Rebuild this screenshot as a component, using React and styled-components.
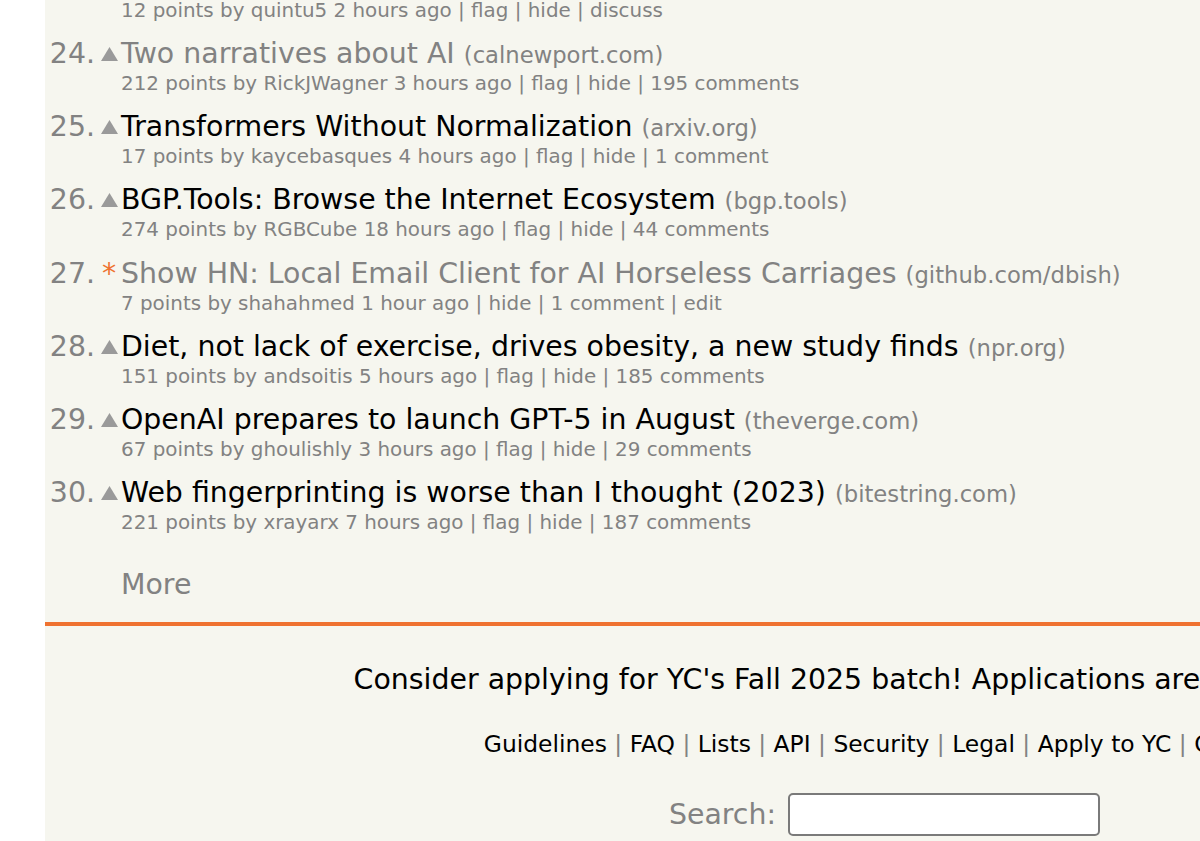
import React from 'react';
import styled, { createGlobalStyle } from 'styled-components';

const GlobalStyle = createGlobalStyle`
  html, body {
    margin: 0;
    padding: 0;
    overflow: hidden;
    background: #ffffff;
  }
  body {
    font-family: Verdana, "DejaVu Sans", sans-serif;
  }
`;

const Page = styled.div`
  padding-left: 45px;
  height: 841px;
`;

const Panel = styled.div`
  display: flow-root;
  width: 1679px;
  height: 100%;
  background: #f6f6ef;
  font-family: Verdana, "DejaVu Sans", sans-serif;
  color: #828282;
`;

const List = styled.div`
  display: grid;
  grid-template-columns: 52px 24px 1fr;
  margin-top: -2px;
`;

const Rank = styled.div`
  font-size: 28.4px;
  line-height: 34px;
  height: 34px;
  text-align: right;
  padding-right: 2px;
`;

const Vote = styled.div`
  display: flex;
  justify-content: center;
  align-items: center;
  height: 34px;
`;

const Star = styled.span`
  color: #ef7230;
  font-size: 28.4px;
  line-height: 34px;
`;

const TitleLine = styled.div`
  font-size: 28.4px;
  line-height: 34px;
  height: 34px;
  white-space: nowrap;
  color: ${(p) => (p.$visited ? '#828282' : '#000000')};
`;

const Site = styled.span`
  font-size: 22.7px;
  line-height: 1;
  color: #828282;
`;

const Sub = styled.div`
  grid-column: 3;
  font-size: 19.9px;
  line-height: 26px;
  height: 26px;
  white-space: nowrap;
  margin-bottom: ${(p) => (p.$last ? '0' : '13.17px')};
`;

const MoreRow = styled.div`
  grid-column: 3;
  font-size: 28.4px;
  line-height: 34px;
  margin-top: 32px;
`;

const Footer = styled.div`
  margin-top: 20px;
  border-top: 4px solid #ef7230;
  text-align: center;
  padding-top: 37px;
`;

const Apply = styled.div`
  font-size: 28.4px;
  line-height: 34px;
  color: #000000;
  white-space: nowrap;
`;

const Links = styled.div`
  margin-top: 33px;
  font-size: 23.4px;
  line-height: 28px;
  color: #828282;
  white-space: nowrap;

  a {
    color: #000000;
  }
`;

const SearchRow = styled.form`
  margin-top: 35px;
  display: flex;
  justify-content: center;
  align-items: center;
  gap: 12px;
  font-size: 28.4px;
`;

const SearchInput = styled.input`
  width: 312px;
  height: 43px;
  box-sizing: border-box;
  border: 2px solid #7a7a7a;
  border-radius: 5px;
  background: #ffffff;
`;

const Arrow = () => (
  <svg width="17" height="14" viewBox="0 0 17 14">
    <polygon points="8.5,0 17,14 0,14" fill="#9a9a9a" />
  </svg>
);

const items = [
  { rank: 24, title: 'Two narratives about AI', site: 'calnewport.com', visited: true, sub: '212 points by RickJWagner 3 hours ago | flag | hide | 195 comments' },
  { rank: 25, title: 'Transformers Without Normalization', site: 'arxiv.org', sub: '17 points by kaycebasques 4 hours ago | flag | hide | 1 comment' },
  { rank: 26, title: 'BGP.Tools: Browse the Internet Ecosystem', site: 'bgp.tools', sub: '274 points by RGBCube 18 hours ago | flag | hide | 44 comments' },
  { rank: 27, title: 'Show HN: Local Email Client for AI Horseless Carriages', site: 'github.com/dbish', visited: true, own: true, sub: '7 points by shahahmed 1 hour ago | hide | 1 comment | edit' },
  { rank: 28, title: 'Diet, not lack of exercise, drives obesity, a new study finds', site: 'npr.org', sub: '151 points by andsoitis 5 hours ago | flag | hide | 185 comments' },
  { rank: 29, title: 'OpenAI prepares to launch GPT-5 in August', site: 'theverge.com', sub: '67 points by ghoulishly 3 hours ago | flag | hide | 29 comments' },
  { rank: 30, title: 'Web fingerprinting is worse than I thought (2023)', site: 'bitestring.com', sub: '221 points by xrayarx 7 hours ago | flag | hide | 187 comments' },
];

const footerLinks = ['Guidelines', 'FAQ', 'Lists', 'API', 'Security', 'Legal', 'Apply to YC', 'Contact'];

export default function App() {
  return (
    <>
      <GlobalStyle />
      <Page>
        <Panel>
          <List>
            <Sub>12 points by quintu5 2 hours ago | flag | hide | discuss</Sub>
            {items.map((it, i) => (
              <React.Fragment key={it.rank}>
                <Rank>{it.rank}.</Rank>
                <Vote>{it.own ? <Star>*</Star> : <Arrow />}</Vote>
                <TitleLine $visited={it.visited}>
                  {it.title} <Site>({it.site})</Site>
                </TitleLine>
                <Sub $last={i === items.length - 1}>{it.sub}</Sub>
              </React.Fragment>
            ))}
            <MoreRow>More</MoreRow>
          </List>
          <Footer>
            <Apply>Consider applying for YC's Fall 2025 batch! Applications are open till Aug 4</Apply>
            <Links>
              {footerLinks.map((l, i) => (
                <React.Fragment key={l}>
                  {i > 0 && ' | '}
                  <a>{l}</a>
                </React.Fragment>
              ))}
            </Links>
            <SearchRow>
              Search:
              <SearchInput type="text" />
            </SearchRow>
          </Footer>
        </Panel>
      </Page>
    </>
  );
}
